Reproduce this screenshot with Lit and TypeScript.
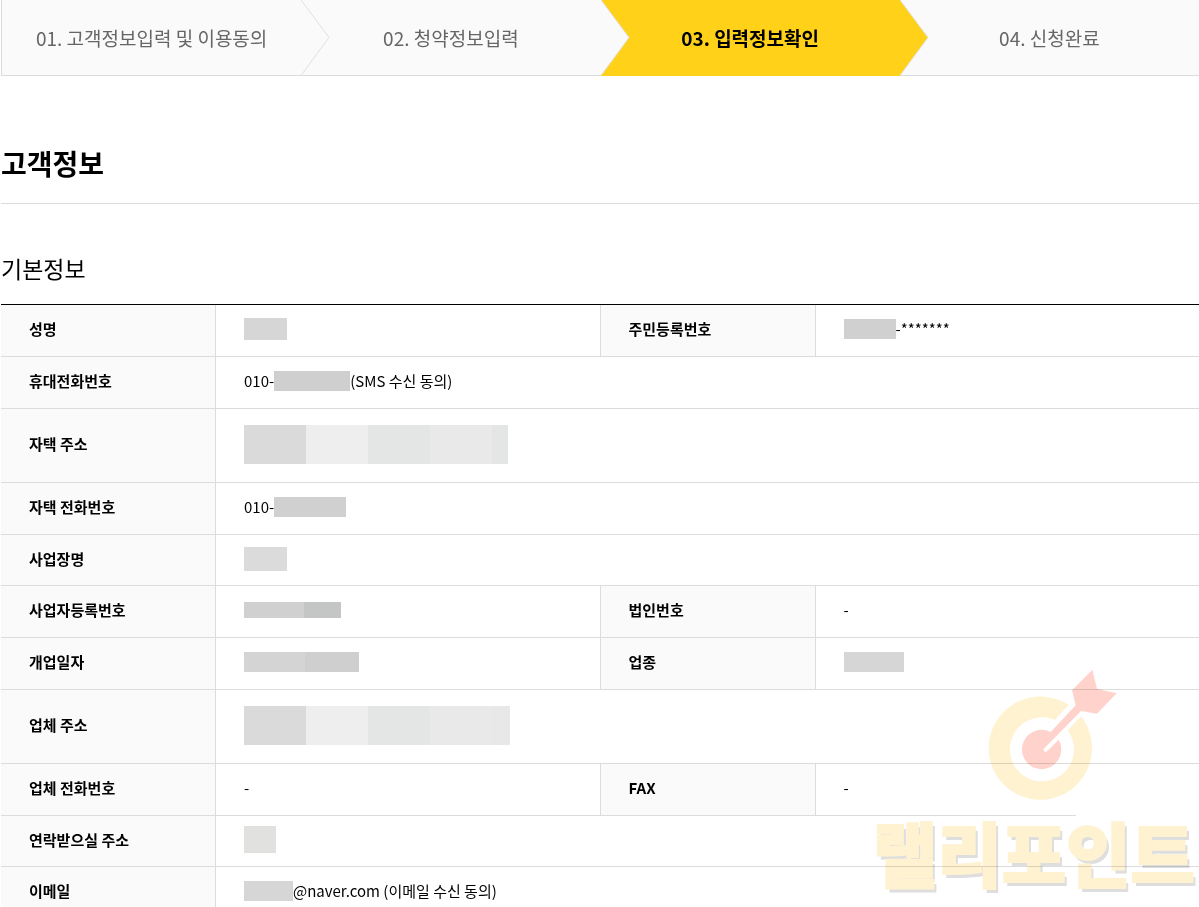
import { LitElement, html, css, svg, nothing } from "lit";
import { customElement, property } from "lit/decorators.js";
import { classMap } from "lit/directives/class-map.js";
import { styleMap } from "lit/directives/style-map.js";

type Mask = { height: number; blocks: [number, string][] };
type Part = string | Mask;
type Field = { label: string; value: Part[] };
type Row = { size: "regular" | "compact" | "tall"; fields: Field[] };

const mask = (height: number, ...blocks: [number, string][]): Mask => ({ height, blocks });

const ROWS: Row[] = [
  {
    size: "regular",
    fields: [
      { label: "성명", value: [mask(22, [43, "#d6d6d6"])] },
      { label: "주민등록번호", value: [mask(20, [52, "#d0d0d0"]), "-*******"] },
    ],
  },
  {
    size: "regular",
    fields: [{ label: "휴대전화번호", value: ["010-", mask(20, [76, "#cfcfcf"]), "(SMS 수신 동의)"] }],
  },
  {
    size: "tall",
    fields: [
      {
        label: "자택 주소",
        value: [mask(39, [62, "#dadada"], [62, "#eeeeee"], [62, "#e4e6e5"], [62, "#e9e9e9"], [16, "#e4e6e5"])],
      },
    ],
  },
  { size: "regular", fields: [{ label: "자택 전화번호", value: ["010-", mask(20, [72, "#d0d0d0"])] }] },
  { size: "compact", fields: [{ label: "사업장명", value: [mask(24, [43, "#dbdbdb"])] }] },
  {
    size: "regular",
    fields: [
      { label: "사업자등록번호", value: [mask(16, [60, "#d0d0d0"], [37, "#c4c5c5"])] },
      { label: "법인번호", value: ["-"] },
    ],
  },
  {
    size: "regular",
    fields: [
      { label: "개업일자", value: [mask(20, [61, "#d4d4d4"], [54, "#cfcfcf"])] },
      { label: "업종", value: [mask(20, [60, "#d6d6d6"])] },
    ],
  },
  {
    size: "tall",
    fields: [
      {
        label: "업체 주소",
        value: [mask(39, [62, "#dadada"], [62, "#eeeeee"], [62, "#e4e6e5"], [62, "#e9e9e9"], [18, "#e8e8e8"])],
      },
    ],
  },
  {
    size: "regular",
    fields: [
      { label: "업체 전화번호", value: ["-"] },
      { label: "FAX", value: ["-"] },
    ],
  },
  { size: "compact", fields: [{ label: "연락받으실 주소", value: [mask(27, [32, "#e1e1e0"])] }] },
  {
    size: "regular",
    fields: [{ label: "이메일", value: [mask(20, [49, "#d6d6d6"]), "@naver.com (이메일 수신 동의)"] }],
  },
];

const STEPS = ["01. 고객정보입력 및 이용동의", "02. 청약정보입력", "03. 입력정보확인", "04. 신청완료"];

@customElement("step-bar")
class StepBar extends LitElement {
  @property({ type: Number }) current = 2;

  static styles = css`
    :host {
      display: block;
    }
    .steps {
      display: flex;
      margin: 0;
      padding: 0;
      list-style: none;
      overflow: hidden;
    }
    .step {
      flex: 1 1 0;
      position: relative;
      display: flex;
      align-items: center;
      justify-content: center;
      box-sizing: border-box;
      height: 76px;
      background: #fafafa;
      border-bottom: 1px solid #dcdcdc;
      color: #666;
      font-size: 19px;
      line-height: 28px;
    }
    .step:first-child {
      border-left: 1px solid #dcdcdc;
    }
    .current {
      background: #ffd119;
      border-color: #ffd119;
      color: #000;
      font-weight: 700;
    }
    .arrow {
      position: absolute;
      top: 0;
      left: 100%;
      z-index: 1;
      width: 30px;
      height: 76px;
    }
    .face {
      fill: #fafafa;
    }
    .edge {
      fill: none;
      stroke: #e0e0e0;
    }
    .current .face {
      fill: #ffd119;
    }
  `;

  render() {
    return html`<ol class="steps">
      ${STEPS.map(
        (label, i) => html`<li
          class=${classMap({ step: true, current: i === this.current })}
          aria-current=${i === this.current ? "step" : nothing}
        >
          <span>${label}</span>
          ${i < STEPS.length - 1
            ? html`<svg class="arrow" viewBox="0 0 30 76" aria-hidden="true">
                ${svg`<path class="face" d="M-1 0H0L28 37.500L0 75.500H-1Z"/><path class="edge" d="M0 0L28 37.500L0 75.500"/>`}
              </svg>`
            : nothing}
        </li>`
      )}
    </ol>`;
  }
}

@customElement("info-table")
class InfoTable extends LitElement {
  static styles = css`
    :host {
      display: block;
    }
    .table {
      width: 100%;
      table-layout: fixed;
      border-collapse: separate;
      border-spacing: 0;
      border-top: 1px solid #000;
      font-size: 15px;
      line-height: 22px;
    }
    .label-col {
      width: 215px;
    }
    .label-col-inner {
      width: 216px;
    }
    .label,
    .value {
      box-sizing: border-box;
      padding: 0 0 3px 28px;
      border-bottom: 1px solid #dcdcdc;
      text-align: left;
      vertical-align: middle;
    }
    .label {
      background: #fafafa;
      border-right: 1px solid #dcdcdc;
      font-weight: 700;
    }
    .value + .label {
      border-left: 1px solid #dcdcdc;
    }
    .regular {
      height: 52px;
    }
    .compact {
      height: 51px;
    }
    .tall {
      height: 74px;
    }
    .line {
      display: flex;
      align-items: center;
    }
    .mask {
      display: flex;
    }
  `;

  private part(p: Part) {
    if (typeof p === "string") return html`<span>${p}</span>`;
    return html`<span class="mask" style=${styleMap({ height: `${p.height}px` })}
      >${p.blocks.map(
        ([width, background]) => html`<span style=${styleMap({ width: `${width}px`, background })}></span>`
      )}</span
    >`;
  }

  render() {
    return html`<table class="table">
      <colgroup>
        <col class="label-col" />
        <col />
        <col class="label-col-inner" />
        <col />
      </colgroup>
      <tbody>
        ${ROWS.map(
          (row) => html`<tr class=${row.size}>
            ${row.fields.map(
              (f) => html`<th class="label" scope="row">${f.label}</th>
                <td class="value" colspan=${row.fields.length === 1 ? 3 : 1}>
                  <div class="line">${f.value.map((p) => this.part(p))}</div>
                </td>`
            )}
          </tr>`
        )}
      </tbody>
    </table>`;
  }
}

@customElement("app-root")
class AppRoot extends LitElement {
  static styles = css`
    :host {
      display: block;
      padding-left: 1px;
      background: #fff;
      color: #000;
      font-family: "Noto Sans CJK KR", "Noto Sans", sans-serif;
    }
    .title {
      margin: 67px 0 0;
      padding-bottom: 20px;
      border-bottom: 1px solid #dcdcdc;
      font-size: 28px;
      font-weight: 700;
      line-height: 40px;
    }
    .subtitle {
      margin: 46px 0 18px;
      font-size: 23px;
      font-weight: 400;
      line-height: 36px;
    }
    .panel {
      position: relative;
    }
    .patch {
      position: absolute;
      top: 508px;
      right: 0;
      width: 123px;
      height: 8px;
      background: #fff;
    }
    .watermark {
      position: absolute;
      top: 364px;
      right: 4px;
      display: flex;
      flex-direction: column;
      mix-blend-mode: multiply;
      pointer-events: none;
    }
    .target {
      width: 130px;
      height: 134px;
      margin-left: 115px;
    }
    .ring {
      fill: #fff2d1;
    }
    .dart {
      fill: #ffd3cc;
    }
    .brand {
      color: #fff2d1;
      font-size: 70px;
      font-weight: 900;
      line-height: 100px;
      -webkit-text-stroke: 2px #fff2d1;
      text-shadow: 3px 4px 0 #dedede;
      white-space: nowrap;
    }
  `;

  render() {
    return html`
      <step-bar .current=${2}></step-bar>
      <main>
        <h2 class="title">고객정보</h2>
        <h3 class="subtitle">기본정보</h3>
        <div class="panel">
          <info-table></info-table>
          <div class="patch"></div>
          <div class="watermark">
            <svg class="target" viewBox="384 51 390 402" aria-hidden="true">
              <path class="ring" d="M626 162A155 155 0 1 0 663 196L623 238A96 96 0 1 1 584 207Z" />
              <path
                class="dart"
                d="M572 243L647 163L636 118L697 56L711 113L770 127L711 188L663 180L550 295L556 305L596 266A59 59 0 1 1 572 243Z"
              />
            </svg>
            <span class="brand">랠리포인트</span>
          </div>
        </div>
      </main>
    `;
  }
}
